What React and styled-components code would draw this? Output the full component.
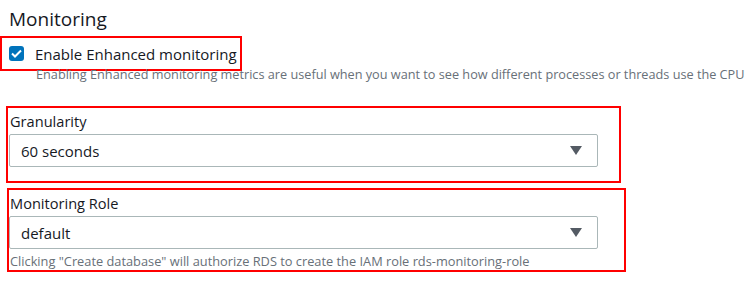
import React from "react";
import styled, { createGlobalStyle } from "styled-components";

const GlobalStyle = createGlobalStyle`
  body {
    margin: 0;
    background: #fff;
    font-family: "Open Sans", "Noto Sans", sans-serif;
    color: #16191f;
  }
`;

const Page = styled.div`
  width: 756px;
  height: 288px;
  padding-top: 6px;
  box-sizing: border-box;
  overflow: hidden;
`;

const Heading = styled.h2`
  margin: 0 0 4px 9px;
  font-size: 19px;
  line-height: 26px;
  font-weight: 400;
`;

const Highlight = styled.div`
  border: 2px solid #f00;
  box-sizing: border-box;
  width: ${(p) => p.$w}px;
  margin-left: ${(p) => p.$left || 0}px;
  margin-top: ${(p) => p.$top || 0}px;
  padding: ${(p) => p.$pad || "0"};
`;

const CheckRow = styled.label`
  display: flex;
  align-items: center;
  gap: 11px;
  height: 29px;
  padding-left: 7px;
  font-size: 15px;
`;

const Box = styled.span`
  width: 15px;
  height: 15px;
  border-radius: 3px;
  background: #0073bb;
  display: flex;
  align-items: center;
  justify-content: center;
`;

const Description = styled.div`
  margin: -5px 0 0 36px;
  font-size: 12.7px;
  line-height: 16px;
  color: #687078;
  white-space: nowrap;
`;

const Label = styled.div`
  font-size: 14.6px;
  line-height: 20px;
  padding-left: 1px;
  margin-bottom: 3px;
`;

const Select = styled.div`
  width: 589px;
  height: 33px;
  box-sizing: border-box;
  border: 1px solid #aab7b8;
  border-radius: 2px;
  display: flex;
  align-items: center;
  justify-content: space-between;
  padding: 0 15px 0 11px;
  font-size: 15px;
`;

const Hint = styled.div`
  font-size: 12.8px;
  line-height: 16px;
  color: #687078;
  padding-left: 1px;
  margin-top: 4px;
  white-space: nowrap;
`;

const Caret = () => (
  <svg width="12" height="9" viewBox="0 0 12 9">
    <path d="M0 0h12L6 9z" fill="#545b64" />
  </svg>
);

const Tick = () => (
  <svg width="11" height="9" viewBox="0 0 11 9">
    <path d="M1 4.5l3 3L10 1.5" fill="none" stroke="#fff" strokeWidth="2" />
  </svg>
);

export default function App() {
  return (
    <Page>
      <GlobalStyle />
      <Heading>Monitoring</Heading>
      <Highlight $w={242} $top={1} $pad="1px 0 1px">
        <CheckRow>
          <Box>
            <Tick />
          </Box>
          Enable Enhanced monitoring
        </CheckRow>
      </Highlight>
      <Description>
        Enabling Enhanced monitoring metrics are useful when you want to see how different processes or threads use the CPU
      </Description>
      <Highlight $w={615} $left={6} $top={24} $pad="3px 0 14px 1px">
        <Label>Granularity</Label>
        <Select>
          60 seconds
          <Caret />
        </Select>
      </Highlight>
      <Highlight $w={619} $left={7} $top={5} $pad="3px 0 1px 0">
        <Label>Monitoring Role</Label>
        <Select>
          default
          <Caret />
        </Select>
        <Hint>
          Clicking "Create database" will authorize RDS to create the IAM role rds-monitoring-role
        </Hint>
      </Highlight>
    </Page>
  );
}
